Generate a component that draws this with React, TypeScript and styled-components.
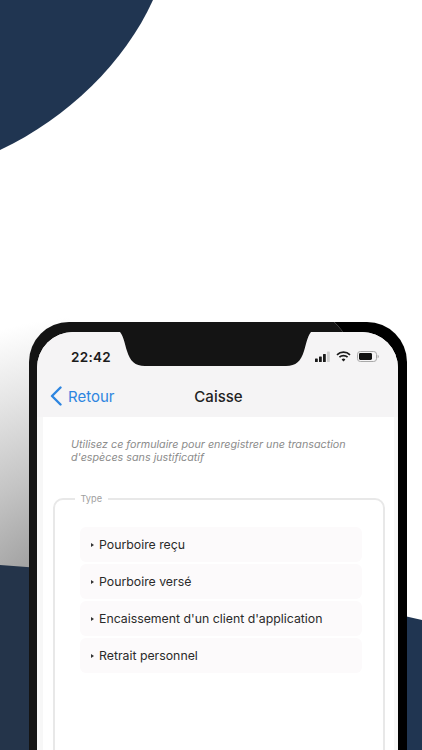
import React, { FC } from 'react';
import styled, { createGlobalStyle } from 'styled-components';

const GlobalStyle = createGlobalStyle`
  html, body {
    margin: 0;
    padding: 0;
    background: #fff;
  }
  body {
    font-family: Inter, "Liberation Sans", sans-serif;
  }
`;

const Page = styled.div`
  position: relative;
  width: 422px;
  height: 750px;
  overflow: hidden;
  padding: 322px 15px 0 29px;
  box-sizing: border-box;
  background: #fff;
`;

const Backdrop = styled.svg`
  position: absolute;
  left: 0;
  top: 0;
`;

const Phone = styled.div`
  position: relative;
  box-sizing: border-box;
  width: 378px;
  height: 520px;
  padding: 10px 9px 0 8px;
  border-radius: 40px 40px 0 0;
  background: #000;
`;

const Sheen = styled.svg`
  position: absolute;
  left: 0;
  top: 0;
`;

const Screen = styled.div`
  position: relative;
  height: 100%;
  border-radius: 36px 36px 0 0;
  background: #f7f7f7;
  overflow: hidden;
`;

const Header = styled.header`
  background: #f5f4f5;
  height: 85px;
  display: flex;
  flex-direction: column;
`;

const StatusBar = styled.div`
  height: 49px;
  display: flex;
  align-items: center;
  justify-content: space-between;
  padding: 0 19px 0 34px;
`;

const Time = styled.span`
  font-size: 13.5px;
  font-weight: 600;
  color: #1b1b1b;
  letter-spacing: 0.3px;
`;

const StatusIcons = styled.div`
  display: flex;
  align-items: center;
  gap: 6px;
`;

const Notch = styled.svg`
  position: absolute;
  left: 83px;
  top: 0;
`;

const NavBar = styled.nav`
  position: relative;
  flex: 1;
  display: flex;
  align-items: center;
  justify-content: center;
  padding-bottom: 6px;
`;

const BackLink = styled.a`
  position: absolute;
  left: 13px;
  top: 0;
  bottom: 6px;
  display: flex;
  align-items: center;
  gap: 6px;
  color: #2d85e0;
  font-size: 15px;
`;

const Title = styled.h1`
  margin: 0;
  font-size: 15px;
  font-weight: 500;
  color: #222;
  transform: translateX(1px);
`;

const Content = styled.main`
  margin: 0 4px 0 6px;
  height: 420px;
  background: #fff;
  padding: 21px 9px 0 10px;
  box-sizing: border-box;
`;

const Intro = styled.p`
  margin: 0 0 0 18px;
  font-size: 10.75px;
  line-height: 13px;
  font-style: italic;
  color: #8b8b8b;
`;

const TypeBox = styled.fieldset`
  margin: 29px 0 0;
  padding: 22px 21px 0 25px;
  min-height: 280px;
  border: 2px solid #e8e8e8;
  border-radius: 10px;
  box-sizing: border-box;
`;

const TypeLegend = styled.legend`
  margin-left: -5px;
  padding: 0 5.5px;
  font-size: 9.2px;
  line-height: 12px;
  color: #a0a0a0;
`;

const TypeList = styled.ul`
  margin: 0;
  padding: 0;
  list-style: none;
  display: flex;
  flex-direction: column;
  gap: 2px;
`;

const TypeItem = styled.li`
  height: 35px;
  display: flex;
  align-items: center;
  gap: 5px;
  padding-left: 11px;
  border-radius: 6px;
  background: #fcfafb;
  font-size: 12.3px;
  color: #2a2a2a;
`;

const Marker = styled.span`
  width: 0;
  height: 0;
  border-style: solid;
  border-width: 2px 0 2px 3px;
  border-color: transparent transparent transparent #333;
`;

const BackChevron: FC = () => (
  <svg width="12" height="20" viewBox="0 0 12 20" fill="none">
    <path d="M10.5 1.5 2 10l8.5 8.5" stroke="#2d85e0" strokeWidth="2.4" strokeLinecap="round" strokeLinejoin="round" />
  </svg>
);

const Signal: FC = () => (
  <svg width="15" height="11" viewBox="0 0 15 11">
    <rect x="0" y="7.5" width="2.8" height="3.5" rx="0.6" fill="#1b1b1b" />
    <rect x="4" y="5.5" width="2.8" height="5.5" rx="0.6" fill="#1b1b1b" />
    <rect x="8" y="3" width="2.8" height="8" rx="0.6" fill="#1b1b1b" />
    <rect x="12" y="0.5" width="2.8" height="10.5" rx="0.6" fill="#cfcfcf" />
  </svg>
);

const Wifi: FC = () => (
  <svg width="15" height="11" viewBox="0 0 15 11" fill="none" stroke="#1b1b1b" strokeWidth="1.7">
    <path d="M1 3.8a9.3 9.3 0 0 1 13 0" />
    <path d="M3.4 6.2a5.9 5.9 0 0 1 8.2 0" />
    <path d="M7.5 10.6 5.6 8.5a2.8 2.8 0 0 1 3.8 0z" fill="#1b1b1b" stroke="none" />
  </svg>
);

const Battery: FC = () => (
  <svg width="22" height="11" viewBox="0 0 22 11">
    <rect x="0.5" y="0.5" width="19" height="10" rx="2.8" fill="none" stroke="#a9a9a9" />
    <rect x="2" y="2" width="13" height="7" rx="1.4" fill="#111" />
    <path d="M20.6 3.8c.8.3 1.2 1 1.2 1.7s-.4 1.4-1.2 1.7z" fill="#a9a9a9" />
  </svg>
);

const types = [
  'Pourboire reçu',
  'Pourboire versé',
  "Encaissement d'un client d'application",
  'Retrait personnel',
];

const App: FC = () => (
  <Page>
    <GlobalStyle />
    <Backdrop width="422" height="750" viewBox="0 0 422 750">
      <defs>
        <radialGradient id="shade" gradientUnits="userSpaceOnUse" cx="90" cy="640" r="340">
          <stop offset="0.28" stopColor="#a2a2a2" />
          <stop offset="0.5" stopColor="#c4c4c4" />
          <stop offset="0.75" stopColor="#e6e6e6" />
          <stop offset="0.95" stopColor="#ffffff" />
        </radialGradient>
      </defs>
      <rect x="0" y="290" width="70" height="290" fill="url(#shade)" />
      <path d="M0 0H153C125 62 68 118 0 150Z" fill="#203551" />
      <path d="M0 565L40 568V750H0Z" fill="#24344a" />
      <path d="M400 615L422 620V750H400Z" fill="#203551" />
    </Backdrop>
    <Phone>
      <Sheen width="378" height="428" viewBox="0 0 378 428">
        <path d="M0 40A40 40 0 0 1 40 0H305C315 8 323 28 323 95V428H0Z" fill="#fff" fillOpacity="0.08" />
        <path d="M305 0C312 6 317 14 320 24" fill="none" stroke="#fff" strokeOpacity="0.25" />
      </Sheen>
      <Screen>
        <Header>
          <StatusBar>
            <Time>22:42</Time>
            <StatusIcons>
              <Signal />
              <Wifi />
              <Battery />
            </StatusIcons>
          </StatusBar>
          <Notch width="191" height="34" viewBox="0 0 191 34">
            <path d="M0 0H191C187 5 186 13 184 19C181 29 176 34 166 34H25C15 34 10 29 7 19C5 13 4 5 0 0Z" fill="#141414" />
          </Notch>
          <NavBar>
            <BackLink>
              <BackChevron />
              Retour
            </BackLink>
            <Title>Caisse</Title>
          </NavBar>
        </Header>
        <Content>
          <Intro>
            Utilisez ce formulaire pour enregistrer une transaction
            <br />
            d'espèces sans justificatif
          </Intro>
          <TypeBox>
            <TypeLegend>Type</TypeLegend>
            <TypeList>
              {types.map((type) => (
                <TypeItem key={type}>
                  <Marker />
                  {type}
                </TypeItem>
              ))}
            </TypeList>
          </TypeBox>
        </Content>
      </Screen>
    </Phone>
  </Page>
);

export default App;
